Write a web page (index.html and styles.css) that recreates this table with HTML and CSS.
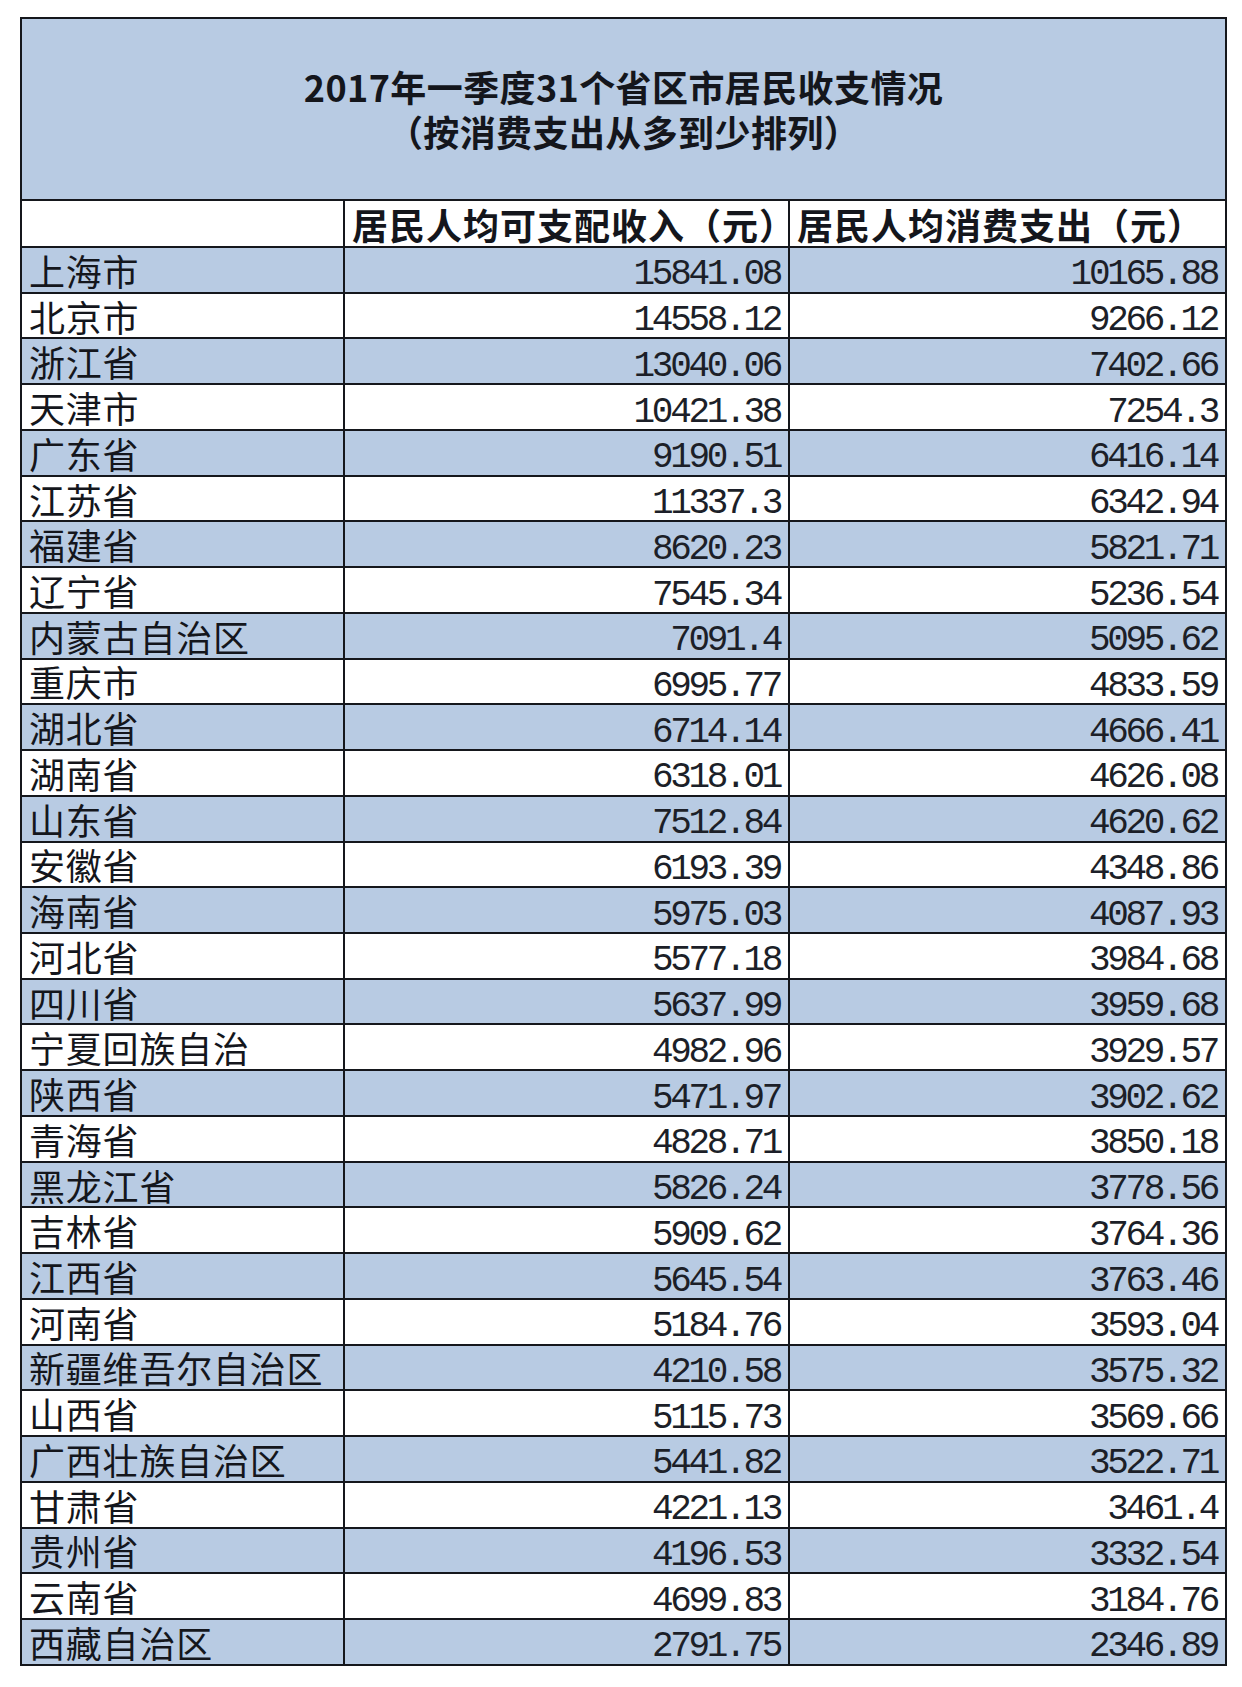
FILE: index.html
```html
<!DOCTYPE html>
<html lang="zh-CN">
<head>
<meta charset="utf-8">
<title>2017年一季度31个省区市居民收支情况</title>
<link rel="stylesheet" href="styles.css">
</head>
<body>
<div class="page">
<table class="sheet">
  <colgroup>
    <col class="c-name">
    <col class="c-inc">
    <col class="c-exp">
  </colgroup>
  <tr class="title-row">
    <td colspan="3" class="title"><div class="t-line">2017年一季度31个省区市居民收支情况</div><div class="t-line">（按消费支出从多到少排列）</div></td>
  </tr>
  <tr class="head-row">
    <td class="name"></td>
    <td class="head">居民人均可支配收入（元）</td>
    <td class="head">居民人均消费支出（元）</td>
  </tr>
  <tr class="row blue"><td class="name">上海市</td><td class="num">15841.08</td><td class="num">10165.88</td></tr>
  <tr class="row"><td class="name">北京市</td><td class="num">14558.12</td><td class="num">9266.12</td></tr>
  <tr class="row blue"><td class="name">浙江省</td><td class="num">13040.06</td><td class="num">7402.66</td></tr>
  <tr class="row"><td class="name">天津市</td><td class="num">10421.38</td><td class="num">7254.3</td></tr>
  <tr class="row blue"><td class="name">广东省</td><td class="num">9190.51</td><td class="num">6416.14</td></tr>
  <tr class="row"><td class="name">江苏省</td><td class="num">11337.3</td><td class="num">6342.94</td></tr>
  <tr class="row blue"><td class="name">福建省</td><td class="num">8620.23</td><td class="num">5821.71</td></tr>
  <tr class="row"><td class="name">辽宁省</td><td class="num">7545.34</td><td class="num">5236.54</td></tr>
  <tr class="row blue"><td class="name">内蒙古自治区</td><td class="num">7091.4</td><td class="num">5095.62</td></tr>
  <tr class="row"><td class="name">重庆市</td><td class="num">6995.77</td><td class="num">4833.59</td></tr>
  <tr class="row blue"><td class="name">湖北省</td><td class="num">6714.14</td><td class="num">4666.41</td></tr>
  <tr class="row"><td class="name">湖南省</td><td class="num">6318.01</td><td class="num">4626.08</td></tr>
  <tr class="row blue"><td class="name">山东省</td><td class="num">7512.84</td><td class="num">4620.62</td></tr>
  <tr class="row"><td class="name">安徽省</td><td class="num">6193.39</td><td class="num">4348.86</td></tr>
  <tr class="row blue"><td class="name">海南省</td><td class="num">5975.03</td><td class="num">4087.93</td></tr>
  <tr class="row"><td class="name">河北省</td><td class="num">5577.18</td><td class="num">3984.68</td></tr>
  <tr class="row blue"><td class="name">四川省</td><td class="num">5637.99</td><td class="num">3959.68</td></tr>
  <tr class="row"><td class="name">宁夏回族自治</td><td class="num">4982.96</td><td class="num">3929.57</td></tr>
  <tr class="row blue"><td class="name">陕西省</td><td class="num">5471.97</td><td class="num">3902.62</td></tr>
  <tr class="row"><td class="name">青海省</td><td class="num">4828.71</td><td class="num">3850.18</td></tr>
  <tr class="row blue"><td class="name">黑龙江省</td><td class="num">5826.24</td><td class="num">3778.56</td></tr>
  <tr class="row"><td class="name">吉林省</td><td class="num">5909.62</td><td class="num">3764.36</td></tr>
  <tr class="row blue"><td class="name">江西省</td><td class="num">5645.54</td><td class="num">3763.46</td></tr>
  <tr class="row"><td class="name">河南省</td><td class="num">5184.76</td><td class="num">3593.04</td></tr>
  <tr class="row blue"><td class="name">新疆维吾尔自治区</td><td class="num">4210.58</td><td class="num">3575.32</td></tr>
  <tr class="row"><td class="name">山西省</td><td class="num">5115.73</td><td class="num">3569.66</td></tr>
  <tr class="row blue"><td class="name">广西壮族自治区</td><td class="num">5441.82</td><td class="num">3522.71</td></tr>
  <tr class="row"><td class="name">甘肃省</td><td class="num">4221.13</td><td class="num">3461.4</td></tr>
  <tr class="row blue"><td class="name">贵州省</td><td class="num">4196.53</td><td class="num">3332.54</td></tr>
  <tr class="row"><td class="name">云南省</td><td class="num">4699.83</td><td class="num">3184.76</td></tr>
  <tr class="row blue"><td class="name">西藏自治区</td><td class="num">2791.75</td><td class="num">2346.89</td></tr>
</table>
</div>
</body>
</html>
```
FILE: styles.css
```css
html, body {
  margin: 0;
  padding: 0;
  background: #ffffff;
}

.page {
  padding: 17px 0 0 20px;
}

.sheet {
  border-collapse: collapse;
  table-layout: fixed;
  width: 1205px;
  color: #14161c;
  font-family: "Noto Sans CJK SC", "Noto Sans", sans-serif;
}

.c-name { width: 323px; }
.c-inc { width: 445px; }
.c-exp { width: 437px; }

.sheet td {
  border: 2px solid #15171c;
  padding: 0;
  white-space: nowrap;
}

.title-row td {
  height: 180px;
}

.title {
  background: #b8cbe3;
  text-align: center;
  vertical-align: middle;
  font-weight: 700;
  font-size: 36px;
  letter-spacing: 0.4px;
}

.t-line {
  height: 45px;
  line-height: 45px;
}

.head-row td {
  height: 45px;
  background: #ffffff;
}

.head {
  font-size: 36px;
  font-weight: 700;
  line-height: 40px;
  padding-left: 7px !important;
  letter-spacing: 1px;
  vertical-align: middle;
}

.row td {
  height: 43.74px;
  vertical-align: middle;
  line-height: 40px;
}

.row.blue td {
  background: #b8cbe3;
}

.name {
  font-size: 36px;
  font-weight: 400;
  letter-spacing: 0.8px;
  padding-left: 7px !important;
}

.row td.num {
  font-family: "Liberation Mono", "DejaVu Sans Mono", monospace;
  font-size: 36px;
  letter-spacing: -3.3px;
  text-align: right;
  color: #1c1f28;
  height: 33.74px;
  line-height: 33px;
  padding: 10px 8px 0 0;
}
```
